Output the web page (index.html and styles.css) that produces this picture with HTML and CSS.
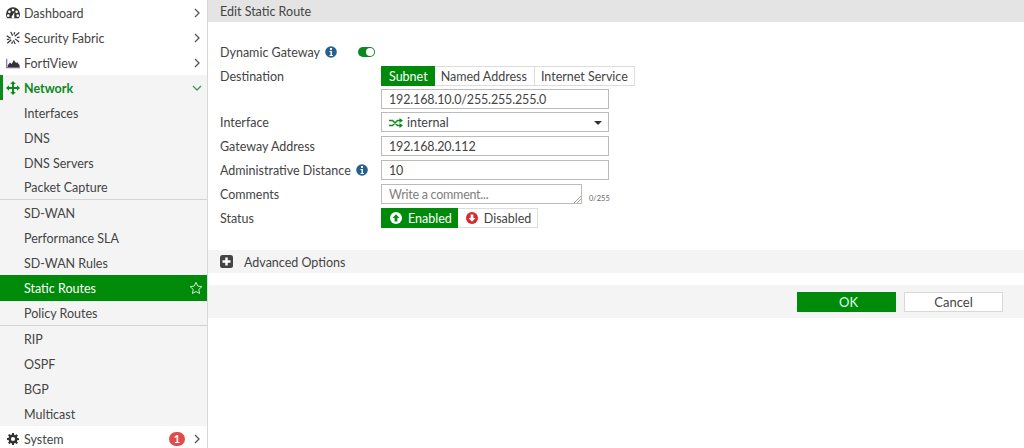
FILE: index.html
```html
<!DOCTYPE html>
<html lang="en">
<head>
<meta charset="utf-8">
<title>Edit Static Route</title>
<link rel="stylesheet" href="styles.css">
</head>
<body>
<div class="app">
<nav class="side">
  <a class="item"><svg class="ico" viewBox="0 0 16 16"><path fill="#333" fill-rule="evenodd" d="M8 1.500A7.800 7.800 0 0 0 0 9.300c0 1.800.6 3.400 1.600 4.700h12.800c1-1.300 1.600-2.900 1.600-4.700A7.800 7.800 0 0 0 8 1.500zM3.900 5.200a1.500 1.500 0 1 1 0 3 1.500 1.500 0 0 1 0-3zM8 3.200a1.500 1.500 0 1 1 0 3 1.500 1.500 0 0 1 0-3zm4.100 2a1.500 1.500 0 1 1 0 3 1.500 1.500 0 0 1 0-3zM2.600 9.500a1.500 1.500 0 1 1 0 3 1.500 1.500 0 0 1 0-3zm10.800 0a1.500 1.500 0 1 1 0 3 1.500 1.500 0 0 1 0-3zM9.600 7.200 9.300 11.600a1.600 1.600 0 1 1-2.200-.4z"/></svg><span class="lbl">Dashboard</span><svg class="chev" viewBox="0 0 8 10"><path d="M2 1l4 4-4 4" fill="none" stroke="#555" stroke-width="1.300"/></svg></a>
  <a class="item"><svg class="ico" viewBox="0 0 16 16"><g fill="none" stroke="#333" stroke-width="1.400"><path d="M.8 5.500l4.500 2.800M15.200 1.800 10 6M1.500 14l4.500-4M15 12.500 10.500 9M5.500 1l2 4.500M8.500 10.500l2 4.500M10 1.500 9 4M6.500 14.500 7.500 12M1 9.800l2.800-.4M12.500 7.500l3-.4"/></g></svg><span class="lbl">Security Fabric</span><svg class="chev" viewBox="0 0 8 10"><path d="M2 1l4 4-4 4" fill="none" stroke="#555" stroke-width="1.300"/></svg></a>
  <a class="item"><svg class="ico" viewBox="0 0 16 16"><path fill="#333" d="M2 13v-2.500l2.500-3 2 1.500L9 4.500l2.500 3.500 1.500-1 2.500 3.500V13z"/><path fill="none" stroke="#7a5c8f" stroke-width="1.200" d="M.8 3v10.500H16"/></svg><span class="lbl">FortiView</span><svg class="chev" viewBox="0 0 8 10"><path d="M2 1l4 4-4 4" fill="none" stroke="#555" stroke-width="1.300"/></svg></a>
  <div class="group">
    <a class="item net"><svg class="ico" viewBox="0 0 16 16"><path fill="#0a8a1e" d="M8 0l3.200 3.400H9.100v3.500h3.500V4.800L16 8l-3.400 3.200V9.100H9.100v3.500h2.100L8 16l-3.200-3.400h2.100V9.100H3.400v2.100L0 8l3.400-3.200v2.100h3.500V3.400H4.800z"/></svg><span class="lbl">Network</span><svg class="chev down" viewBox="0 0 10 8"><path d="M1 2l4 4 4-4" fill="none" stroke="#3a9a4a" stroke-width="1.300"/></svg></a>
    <a class="sub">Interfaces</a>
    <a class="sub">DNS</a>
    <a class="sub">DNS Servers</a>
    <a class="sub sep">Packet Capture</a>
    <a class="sub">SD-WAN</a>
    <a class="sub">Performance SLA</a>
    <a class="sub">SD-WAN Rules</a>
    <a class="sub active"><span class="lbl">Static Routes</span><svg class="star" viewBox="0 0 16 16"><path d="M8 1.500l2 4.300 4.700.6-3.500 3.200.9 4.700L8 12l-4.100 2.300.9-4.700L1.300 6.400 6 5.800z" fill="none" stroke="#d8f0d8" stroke-width="1.100"/></svg></a>
    <a class="sub sep">Policy Routes</a>
    <a class="sub">RIP</a>
    <a class="sub">OSPF</a>
    <a class="sub">BGP</a>
    <a class="sub">Multicast</a>
  </div>
  <a class="item"><svg class="ico gear" viewBox="0 0 16 16"><path fill="#333" fill-rule="evenodd" d="M6.800 0h2.400l.4 2.400 1.300.5 2-1.400 1.700 1.700-1.400 2 .5 1.300 2.400.4v2.400l-2.400.4-.5 1.300 1.400 2-1.700 1.700-2-1.400-1.300.5-.4 2.300H6.800l-.4-2.300-1.300-.5-2 1.400-1.700-1.700 1.400-2-.5-1.300L0 9.200V6.800l2.300-.4.500-1.300-1.400-2 1.700-1.700 2 1.400 1.300-.5zM8 5.200a2.800 2.800 0 1 0 0 5.600 2.800 2.800 0 0 0 0-5.600z"/></svg><span class="lbl">System</span><span class="badge">1</span><svg class="chev" viewBox="0 0 8 10"><path d="M2 1l4 4-4 4" fill="none" stroke="#555" stroke-width="1.300"/></svg></a>
</nav>
<main class="main">
  <header class="title">Edit Static Route</header>
  <form class="form">
    <div class="row">
      <label class="field-label">Dynamic Gateway<svg class="info" viewBox="0 0 12 12"><circle cx="6" cy="6" r="5.800" fill="#25608f"/><rect x="5" y="2" width="2" height="2" fill="#fff"/><path fill="#fff" d="M4.500 5H7v4h1v1H4.500V9h1V6h-1z"/></svg></label>
      <span class="switch"></span>
    </div>
    <div class="row">
      <label class="field-label">Destination</label>
      <div class="seg">
        <span class="opt on">Subnet</span><span class="opt wide">Named Address</span><span class="opt">Internet Service</span>
      </div>
    </div>
    <div class="row tight">
      <span class="field-label"></span>
      <div class="input">192.168.10.0/255.255.255.0</div>
    </div>
    <div class="row tight">
      <label class="field-label">Interface</label>
      <div class="input select"><svg class="port" viewBox="0 0 14 10"><path d="M0 2.500h3.500l5 5H12M0 7.500h3.500l5-5H12" fill="none" stroke="#0a8a1e" stroke-width="1.500"/><path fill="#0a8a1e" d="M10.500 0l3.500 2.500L10.500 5zM10.500 5l3.500 2.500-3.500 2.500z"/></svg><span class="grow">internal</span><span class="caret"></span></div>
    </div>
    <div class="row">
      <label class="field-label">Gateway Address</label>
      <div class="input">192.168.20.112</div>
    </div>
    <div class="row">
      <label class="field-label">Administrative Distance<svg class="info" viewBox="0 0 12 12"><circle cx="6" cy="6" r="5.800" fill="#25608f"/><rect x="5" y="2" width="2" height="2" fill="#fff"/><path fill="#fff" d="M4.500 5H7v4h1v1H4.500V9h1V6h-1z"/></svg></label>
      <div class="input">10</div>
    </div>
    <div class="row">
      <label class="field-label">Comments</label>
      <div class="input comment"><span class="grow ph">Write a comment...</span><svg class="grip" viewBox="0 0 8 8"><path d="M1 8l7-7M4 8l4-4" stroke="#888" stroke-width=".8"/></svg></div>
      <span class="count">0/255</span>
    </div>
    <div class="row">
      <label class="field-label">Status</label>
      <div class="seg">
        <span class="opt on st"><svg class="st-ico" viewBox="0 0 12 12"><circle cx="6" cy="6" r="6" fill="#fff"/><path fill="#0a8a1e" d="M6 2.300 9.500 6H7.400v3.500H4.600V6H2.500z"/></svg>Enabled</span><span class="opt st"><svg class="st-ico" viewBox="0 0 12 12"><circle cx="6" cy="6" r="6" fill="#d9272e"/><path fill="#fff" d="M6 9.700 2.500 6h2.100V2.500h2.800V6h2.100z"/></svg>Disabled</span>
      </div>
    </div>
  </form>
  <div class="advanced"><svg class="plus" viewBox="0 0 13 13"><rect width="13" height="13" rx="2.500" fill="#444"/><path fill="#fff" d="M5.300 2.500h2.400v2.800h2.800v2.400H7.700v2.800H5.300V7.700H2.500V5.300h2.800z"/></svg><span class="adv-text">Advanced Options</span></div>
  <footer class="footer">
    <button class="btn ok" type="button">OK</button>
    <button class="btn" type="button">Cancel</button>
  </footer>
</main>
</div>
</body>
</html>
```
FILE: styles.css
```css
* { box-sizing: border-box; }
html, body { margin: 0; height: 100%; overflow: hidden; background: #fff; }
body { font: 12.5px/20px Lato, "Open Sans", sans-serif; color: #444; }
.app { display: flex; height: 448px; }
.side { width: 208px; flex: none; border-right: 1px solid #d8d8d8; background: #fff; overflow: hidden; }
.item, .sub { display: flex; align-items: center; height: 25px; color: #444; }
.item { padding-left: 6px; padding-right: 6px; }
.group { background: #f4f4f4; }
.ico { width: 14px; height: 14px; margin-right: 4px; flex: none; }
.ico.gear { width: 12px; height: 12px; margin: 0 5px 0 1px; }
.lbl { flex: 1; padding-top: 2px; }
.chev { width: 8px; height: 10px; flex: none; }
.chev.down { width: 10px; height: 8px; margin-right: -1px; }
.net { color: #0a8a1e; font-weight: 700; border-left: 3px solid #0a8a1e; padding-left: 3px; }
.sub { padding: 2px 4px 0 24px; }
.sub.sep { border-bottom: 1px solid #d4d4d4; }
.sub.active { height: 26px; padding-top: 0; background: #008a0a; color: #fff; }
.star { width: 14px; height: 14px; flex: none; }
.badge { width: 16px; height: 14px; border-radius: 7px; margin-right: 8px; background: #e04b4b; color: #fff; font-size: 11px; line-height: 14px; text-align: center; font-weight: 700; }
.main { flex: 1; min-width: 0; }
.title { height: 22px; line-height: 24px; background: #e4e4e4; padding-left: 12px; }
.form { padding: 20px 0 0 12px; display: flex; flex-direction: column; gap: 4px; }
.row { display: flex; align-items: center; height: 20px; }
.row.tight { margin-top: -1px; }
.field-label { width: 161px; height: 20px; padding-top: 2px; flex: none; display: flex; align-items: center; white-space: pre; }
.info { width: 12px; height: 12px; margin: -2px 0 0 5px; }
.switch { display: flex; align-items: center; justify-content: flex-end; width: 17px; height: 10px; padding: 0 1px; border-radius: 5px; background: #0a8a1e; margin-left: -23px; }
.switch::after { content: ""; width: 8px; height: 8px; border-radius: 50%; background: #fff; }
.seg { display: flex; height: 20px; }
.opt { height: 20px; line-height: 19px; padding: 0 6px; border: 1px solid #ddd; border-left: 0; color: #444; }
.opt:first-child { border-left: 1px solid #ddd; padding-left: 7px; }
.opt.wide { padding-right: 7px; }
.opt.on { background: #008a0a; border-color: #008a0a; color: #fff; }
.input { width: 228px; height: 20px; border: 1px solid #bbb; padding: 1px 0 0 7px; color: #444; display: flex; align-items: center; letter-spacing: -.15px; }
.select { padding-right: 6px; letter-spacing: 0; }
.port { width: 14px; height: 10px; margin-right: 4px; flex: none; }
.grow { flex: 1; }
.caret { width: 0; height: 0; border-left: 4px solid transparent; border-right: 4px solid transparent; border-top: 4px solid #333; }
.comment { width: 201px; padding-right: 0; align-items: flex-end; letter-spacing: -.25px; }
.comment .grow { align-self: center; }
.ph { color: #808080; }
.grip { width: 8px; height: 8px; flex: none; }
.count { font-size: 7.5px; color: #666; margin: 0 0 -2px 7px; align-self: flex-end; line-height: 14px; }
.opt.st { display: flex; align-items: center; padding: 0 6px 0 8px; }
.opt.st:first-child { padding-right: 5px; }
.st-ico { width: 12px; height: 12px; margin-right: 6px; }
.advanced { margin-top: 22px; height: 23px; background: #f4f4f4; padding-left: 12px; display: flex; align-items: center; }
.adv-text { padding-top: 2px; }
.plus { width: 13px; height: 13px; margin-right: 11px; }
.footer { margin-top: 12px; height: 33px; background: #f4f4f4; display: flex; justify-content: flex-end; align-items: center; gap: 8px; padding-right: 21px; }
.btn { width: 99px; height: 20px; background: #fff; border: 1px solid #d8d8d8; font: 13px/18px Lato, sans-serif; color: #444; padding: 0; }
.btn.ok { background: #008a0a; border-color: #008a0a; color: #dfe; padding-left: 4px; }
```
